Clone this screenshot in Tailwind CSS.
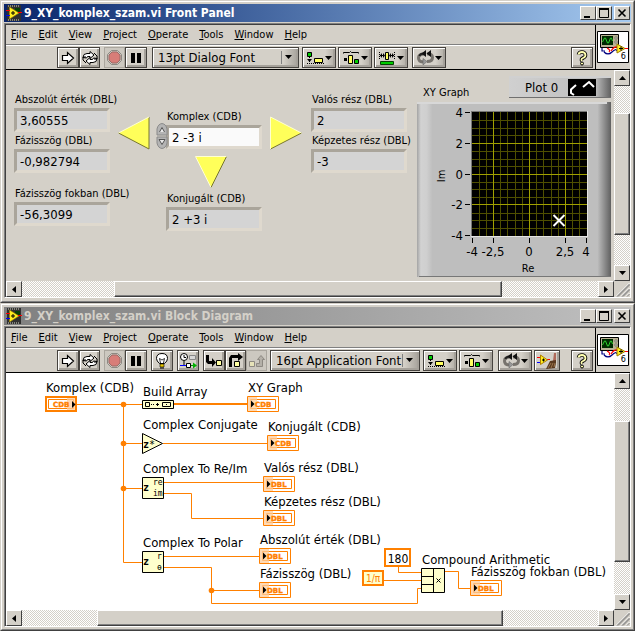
<!DOCTYPE html>
<html lang="en">
<head>
  <meta charset="UTF-8" />
  <meta name="viewport" content="width=device-width, initial-scale=1" />
  <title>9_XY_komplex_szam.vi</title>
  <script src="https://cdn.jsdelivr.net/npm/@tailwindcss/browser@4"></script>
</head>

<body class="min-h-screen flex flex-col bg-[#d4d0c8] text-black text-[11px] leading-4 font-['DejaVu_Sans_Condensed','DejaVu_Sans',sans-serif]">

  <!-- shared symbols -->
  <svg class="hidden" xmlns="http://www.w3.org/2000/svg">
    <symbol id="vi" viewBox="0 0 16 16">
      <path d="M1 0h14v16H1z" fill="#303030" />
      <path d="M2 1h12M2 15h12" stroke="#d8d8c8" stroke-dasharray="1 1" />
      <path d="M9 3h5v5H9z" fill="#064006" />
      <path d="M3.500 2v12L13 8z" fill="#ffee20" stroke="#a08000" stroke-width=".6" />
      <path d="M5 8h4M7 6v4" stroke="#000" />
      <path d="M0 5.500h4M12 7.500h4" stroke="#f00" />
      <path d="M0 10.500h4" stroke="#00f" />
    </symbol>
    <symbol id="viBig" viewBox="0 0 32 32">
      <path d="M.5.5h31v31H.5z" fill="#fff" stroke="#000" />
      <path d="M3.500 3.500h18v13h-18z" fill="#b9b294" stroke="#000" />
      <path d="M5 5h11v9H5z" fill="#002a00" />
      <path d="M5.500 11l2-4h1l2 5h1l2-5h1l1 3" fill="none" stroke="#2fd02f" />
      <path d="M18 6h2v2h-2zM18 10h2v2h-2z" fill="#e8e4d0" stroke="#555" stroke-width=".6" />
      <path d="M5 17v3h3M7 21q4 4 8 0t5-1" fill="none" stroke="#000080" stroke-width="1.200" />
      <path d="M10 17q4 2 2 4M14 20q3-5 7-4" fill="none" stroke="#f00" stroke-width="1.200" />
      <path d="M20 13v9l8-4.500z" fill="#ffee20" stroke="#a08000" />
      <path d="M22 17.500h4M24 15.500v4" stroke="#000" />
      <path d="M28 17.500h3" stroke="#f00" />
    </symbol>
    <symbol id="run" viewBox="0 0 14 14">
      <path d="M1.500 4.500h5v-3l6 5.500-6 5.500v-3h-5z" fill="#fff" stroke="#000" stroke-width="1.200" />
    </symbol>
    <symbol id="loop" viewBox="0 0 16 14">
      <path d="M1 6.500q0-4 4-4h3V.5l4 3.500-4 3.500v-2H5.500l-1 1.500z" fill="#fff" stroke="#000" />
      <path d="M15 7.500q0 4-4 4H8v2L4 10l4-3.500v2h2.500l1-1.500z" fill="#fff" stroke="#000" />
      <path d="M12 2l3 3v3h-3M4 12L1 9V6h3" fill="none" stroke="#000" />
    </symbol>
    <symbol id="stop" viewBox="0 0 15 15">
      <path d="M4.500.5h6l4 4v6l-4 4h-6l-4-4v-6z" fill="#c9c5bd" stroke="#8d8982" />
      <path d="M5 2h5l3 3v5l-3 3H5l-3-3V5z" fill="#d87d78" stroke="#9c6a66" />
    </symbol>
    <symbol id="pause" viewBox="0 0 12 12">
      <path d="M1 1h4v10H1zM7 1h4v10H7z" />
    </symbol>
    <symbol id="bulb" viewBox="0 0 14 16">
      <path d="M4.500 10.500Q1.500 8 1.500 5.500q0-5 5.500-5t5.500 5q0 2.500-3 5z" fill="#fff" stroke="#000" />
      <path d="M5.500 10L4.500 5.500 7 7l2.500-1.500L8.500 10" fill="none" stroke="#000" stroke-width=".8" />
      <path d="M5 11h4v3H5z" fill="#e8c800" stroke="#000" stroke-width=".6" />
      <path d="M5 15h4" stroke="#000" />
    </symbol>
    <symbol id="retain" viewBox="0 0 18 16">
      <circle cx="5" cy="4" r="3.500" fill="#fff" stroke="#000" />
      <path d="M5 2v2.500h2M5 8v4" fill="none" stroke="#000" />
      <path d="M10.500 2.500h6v4h-6z" fill="#d8d8d8" stroke="#888" />
      <path d="M1 12.500h7" stroke="#00f" />
      <path d="M7.500 10.500h4v4h-4z" fill="#fff" stroke="#000" />
      <path d="M12 12.500h3" stroke="#00a000" />
      <path d="M14 9.500v6l4-3z" fill="#00b000" />
    </symbol>
    <symbol id="into" viewBox="0 0 18 16">
      <path d="M1 2h3v6h3V5l4 4.500L7 14v-3H3L1 9z" />
      <path d="M11.500 7.500h5v5h-5z" fill="#ffffa0" stroke="#000" />
    </symbol>
    <symbol id="over" viewBox="0 0 16 16">
      <path d="M1 14V5l2-3h7V0l5 4-5 4V5H4v9z" />
      <path d="M6.500 8.500h5v5h-5z" fill="#ffffa0" stroke="#000" />
    </symbol>
    <symbol id="out" viewBox="0 0 18 16">
      <path d="M1.500 8.500h5v5h-5z" fill="#e6e2b8" stroke="#8d8982" />
      <path d="M8.500 13.500v-3h3V6.500h-2l3.500-4 3.500 4h-2v7z" fill="#b4b0a8" stroke="#8d8982" />
    </symbol>
    <symbol id="align" viewBox="0 0 18 14">
      <path d="M1.500 1.500h4v4h-4z" fill="#0c0" stroke="#000" />
      <path d="M3.500 6v6M1 12.500h17" stroke="#000" stroke-dasharray="1 1" />
      <path d="M1 8h5L3.500 11z" />
      <path d="M8.500 7.500h8v4h-8z" fill="#ffff60" stroke="#000" />
    </symbol>
    <symbol id="distribute" viewBox="0 0 18 14">
      <path d="M1.500 2.500v-1h6L8.500.5l1 1h7v1" fill="none" stroke="#000" />
      <path d="M2 7h3v3H2z" />
      <path d="M6.500 4.500h4v8h-4z" fill="#ffff60" stroke="#000" />
      <path d="M12.500 8.500h4v4h-4z" fill="#0c0" stroke="#000" />
    </symbol>
    <symbol id="resize" viewBox="0 0 16 14">
      <path d="M.5 1v8M15.500 1v8" stroke="#000" stroke-dasharray="1 1" />
      <path d="M1 4.500h4M11 4.500h4" stroke="#000" />
      <path d="M3 2v5L1 4.500zM4 2l2 2.500L4 7zM13 2v5l2-2.500zM12 2l-2 2.500L12 7z" />
      <path d="M6.500 1.500h3v7h-3z" fill="#ffff60" stroke="#000" />
      <path d="M1.500 10.500h13v3h-13z" fill="#0c0" stroke="#064006" />
    </symbol>
    <symbol id="reorder" viewBox="0 0 17 15">
      <path d="M7 4Q1.500 4 1.500 8t5.500 4" fill="none" stroke="#77736d" stroke-width="3" />
      <path d="M10 11.500q5.500 0 5.500-4T10 4" fill="none" stroke="#77736d" stroke-width="3" />
      <path d="M9 3.500Q3 3 2.500 6" fill="none" stroke="#222" stroke-width="2" />
      <path d="M9 0v7L4.500 3.500zM14 0v7L9.500 3.500z" fill="#111" />
      <path d="M6 8.500V15l4-3.500z" fill="#999" stroke="#666" stroke-width=".6" />
    </symbol>
    <symbol id="clean" viewBox="0 0 20 16">
      <path d="M0 4.500h3M10 6.500h3" stroke="#f00" />
      <path d="M0 9.500h3" stroke="#00f" />
      <path d="M3.500 2v9.500L10.500 7z" fill="#ffee20" stroke="#b08000" />
      <path d="M5 7h3M6.500 5.500v3" stroke="#000" />
      <path d="M17 0h2v8h-3z" fill="#b06a5a" />
      <path d="M13 8l6-1v3l-1 5-9 1z" fill="#5a3a20" />
      <path d="M11 15l3-5M14 15l2-5M17 14l1-4" stroke="#b89060" stroke-width=".7" />
    </symbol>
    <symbol id="help" viewBox="0 0 12 16">
      <path d="M2.500 4.500Q3 2 6 2t3.500 3Q9.500 7 7 8T6 11" fill="none" stroke="#000" stroke-width="3.600" />
      <path d="M2.500 4.500Q3 2 6 2t3.500 3Q9.500 7 7 8T6 11" fill="none" stroke="#ffffb0" stroke-width="1.800" />
      <circle cx="6" cy="13.500" r="1.500" fill="#ffffb0" stroke="#000" />
    </symbol>
    <symbol id="down" viewBox="0 0 7 4"><path d="M0 0h7L3.500 4z" /></symbol>
    <symbol id="up" viewBox="0 0 7 4"><path d="M0 4h7L3.500 0z" /></symbol>
    <symbol id="left" viewBox="0 0 4 7"><path d="M4 0v7L0 3.500z" /></symbol>
    <symbol id="right" viewBox="0 0 4 7"><path d="M0 0v7l4-3.500z" /></symbol>
    <symbol id="min" viewBox="0 0 10 10"><path d="M1 8h6v2H1z" /></symbol>
    <symbol id="max" viewBox="0 0 10 10"><path d="M.5 1v8.500h9V1" fill="none" stroke="#000" /><path d="M0 0h10v2H0z" /></symbol>
    <symbol id="close" viewBox="0 0 10 10"><path d="M1.500 1.500l7 7M8.500 1.500l-7 7" stroke="#000" stroke-width="1.600" /></symbol>
    <symbol id="grip" viewBox="0 0 16 16">
      <path d="M2 15.500L15.500 2M7 15.500L15.500 7M12 15.500l3.500-3.500" stroke="#fff" />
      <path d="M3 15.500L15.500 3M4 15.500L15.500 4M8 15.500L15.500 8M9 15.500L15.500 9M13 15.500l2.500-2.500" stroke="#808080" />
    </symbol>
    <symbol id="indicator" viewBox="0 0 32 16">
      <path d="M.5.5h31v15H.5z" fill="#fff" stroke="#ff8000" />
      <path d="M3.500 3.500h25v9h-25z" fill="none" stroke="#ff8000" />
      <path d="M1 1h9v14H1z" fill="#ffcc99" fill-opacity=".75" />
      <path d="M4 4.500v7L7.500 8z" />
    </symbol>
  </svg>

  <!-- Front Panel -->
  <section class="border border-t-[#d4d0c8] border-l-[#d4d0c8] border-r-[#404040] border-b-[#404040]">
    <div class="border border-t-white border-l-white border-r-[#808080] border-b-[#808080] p-[2px] pb-[3px]">
      <header class="flex h-[18px] items-center bg-linear-to-r from-[#0a246a] to-[#a6caf0] pl-[2px] pr-px">
        <svg class="size-4"><use href="#vi" /></svg>
        <h1 class="flex-1 pl-[2px] text-xs font-bold text-white">9_XY_komplex_szam.vi Front Panel</h1>
        <button aria-label="Minimize" class="grid h-[14px] w-4 place-items-center border border-t-white border-l-white border-r-[#404040] border-b-[#404040] bg-[#d4d0c8]"><svg class="size-[10px]"><use href="#min" /></svg></button>
        <button aria-label="Maximize" class="grid h-[14px] w-4 place-items-center border border-t-white border-l-white border-r-[#404040] border-b-[#404040] bg-[#d4d0c8]"><svg class="size-[10px]"><use href="#max" /></svg></button>
        <button aria-label="Close" class="ml-[2px] grid h-[14px] w-4 place-items-center border border-t-white border-l-white border-r-[#404040] border-b-[#404040] bg-[#d4d0c8]"><svg class="size-[10px]"><use href="#close" /></svg></button>
      </header>

      <div class="mt-px border-t border-l border-t-[#808080] border-l-[#808080] border-r border-b border-r-white border-b-white">
        <div class="border-t border-l border-[#404040]">
          <div class="flex h-[45px] border-b border-black">
            <div class="flex-1">
              <nav class="flex h-5 items-center gap-[11px] border-b border-[#808080] pl-[5px]">
                <button><u>F</u>ile</button>
                <button><u>E</u>dit</button>
                <button><u>V</u>iew</button>
                <button><u>P</u>roject</button>
                <button><u>O</u>perate</button>
                <button><u>T</u>ools</button>
                <button><u>W</u>indow</button>
                <button><u>H</u>elp</button>
              </nav>
              <div class="flex h-6 items-center border-t border-white pl-[51px] pr-[2px]">
                <button aria-label="Run" class="grid h-[21px] w-[22px] place-items-center border border-[#45423e] bg-[#d4d0c8] shadow-[inset_1px_1px_#fff,inset_-2px_-2px_#a5a19a]"><svg class="size-[14px]"><use href="#run" /></svg></button>
                <button aria-label="Run continuously" class="grid h-[21px] w-[21px] place-items-center border border-[#45423e] bg-[#d4d0c8] shadow-[inset_1px_1px_#fff,inset_-2px_-2px_#a5a19a]"><svg class="h-[14px] w-4"><use href="#loop" /></svg></button>
                <button aria-label="Abort" disabled class="ml-1 grid h-[21px] w-[21px] place-items-center border border-[#aaa69e] bg-[#ccc8c0]"><svg class="size-[15px]"><use href="#stop" /></svg></button>
                <button aria-label="Pause" class="grid h-[21px] w-[22px] place-items-center border border-[#45423e] bg-[#d4d0c8] shadow-[inset_1px_1px_#fff,inset_-2px_-2px_#a5a19a]"><svg class="size-3"><use href="#pause" /></svg></button>
                <div class="relative ml-[5px] h-[21px] w-[147px]">
                  <select aria-label="Text settings" class="h-full w-full appearance-none border border-[#45423e] bg-linear-to-r from-[#d4d0c8] from-90% to-[#a5a19a] pl-[5px] text-[13px] shadow-[inset_1px_1px_#fff,inset_-2px_-2px_#a5a19a]"><option>13pt Dialog Font</option></select>
                  <span class="pointer-events-none absolute inset-y-1 right-[17px] border-l border-[#808080]"></span>
                  <svg class="pointer-events-none absolute top-2 right-[7px] h-1 w-[7px]"><use href="#down" /></svg>
                </div>
                <button aria-label="Align objects" class="ml-[3px] flex h-[21px] w-[34px] items-center justify-center gap-px border border-[#45423e] bg-linear-to-r from-[#d4d0c8] from-70% to-[#b0aca4] shadow-[inset_1px_1px_#fff,inset_-2px_-2px_#a5a19a]"><svg class="h-[14px] w-[18px]"><use href="#align" /></svg><svg class="h-1 w-[7px]"><use href="#down" /></svg></button>
                <button aria-label="Distribute objects" class="ml-[2px] flex h-[21px] w-[34px] items-center justify-center gap-px border border-[#45423e] bg-linear-to-r from-[#d4d0c8] from-70% to-[#b0aca4] shadow-[inset_1px_1px_#fff,inset_-2px_-2px_#a5a19a]"><svg class="h-[14px] w-[18px]"><use href="#distribute" /></svg><svg class="h-1 w-[7px]"><use href="#down" /></svg></button>
                <button aria-label="Resize objects" class="ml-[2px] flex h-[21px] w-[34px] items-center justify-center gap-[2px] border border-[#45423e] bg-linear-to-r from-[#d4d0c8] from-70% to-[#b0aca4] shadow-[inset_1px_1px_#fff,inset_-2px_-2px_#a5a19a]"><svg class="h-[14px] w-4"><use href="#resize" /></svg><svg class="h-1 w-[7px]"><use href="#down" /></svg></button>
                <button aria-label="Reorder" class="ml-1 flex h-[21px] w-[34px] items-center justify-center gap-px border border-[#45423e] bg-linear-to-r from-[#d4d0c8] from-70% to-[#b0aca4] shadow-[inset_1px_1px_#fff,inset_-2px_-2px_#a5a19a]"><svg class="h-[15px] w-[17px]"><use href="#reorder" /></svg><svg class="h-1 w-[7px]"><use href="#down" /></svg></button>
                <button aria-label="Help" class="ml-auto grid h-[21px] w-[22px] place-items-center border border-[#45423e] bg-[#d4d0c8] shadow-[inset_1px_1px_#fff,inset_-2px_-2px_#a5a19a]"><svg class="h-4 w-3"><use href="#help" /></svg></button>
              </div>
            </div>
            <div class="relative grid w-[35px] place-items-center border-l border-black">
              <svg class="size-8"><use href="#viBig" /></svg>
              <span class="absolute right-1 bottom-[7px] text-[9px] leading-3">6</span>
            </div>
          </div>

          <div class="flex">
            <main class="relative h-[211px] flex-1 overflow-hidden">
              <!-- controls and indicators -->
              <div class="absolute left-2 top-[22px] w-24">
                <label for="absz" class="block whitespace-nowrap pl-px">Abszolút érték (DBL)</label>
                <input id="absz" readonly value="3,60555" class="block h-6 w-full border-[3px] border-t-[#aaa59b] border-l-[#aaa59b] border-r-[#dfd9ce] border-b-[#dfd9ce] bg-[#d4d4d4] px-[3px] text-[13px]" />
              </div>
              <div class="absolute left-2 top-[63px] w-24">
                <label for="fazis" class="block whitespace-nowrap pl-px">Fázisszög (DBL)</label>
                <input id="fazis" readonly value="-0,982794" class="block h-6 w-full border-[3px] border-t-[#aaa59b] border-l-[#aaa59b] border-r-[#dfd9ce] border-b-[#dfd9ce] bg-[#d4d4d4] px-[3px] text-[13px]" />
              </div>
              <div class="absolute left-2 top-[116px] w-24">
                <label for="fokban" class="block whitespace-nowrap pl-px">Fázisszög fokban (DBL)</label>
                <input id="fokban" readonly value="-56,3099" class="block h-6 w-full border-[3px] border-t-[#aaa59b] border-l-[#aaa59b] border-r-[#dfd9ce] border-b-[#dfd9ce] bg-[#d4d4d4] px-[3px] text-[13px]" />
              </div>
              <div class="absolute left-40 top-[39px] w-24">
                <label for="komplex" class="block whitespace-nowrap pl-px">Komplex (CDB)</label>
                <input id="komplex" value="2 -3 i" class="block h-6 w-full border-[3px] border-t-[#aaa59b] border-l-[#aaa59b] border-r-[#dfd9ce] border-b-[#dfd9ce] bg-[#fafafa] px-[3px] text-[13px]" />
              </div>
              <div class="absolute left-40 top-[121px] w-24">
                <label for="konj" class="block whitespace-nowrap pl-px">Konjugált (CDB)</label>
                <input id="konj" readonly value="2 +3 i" class="block h-6 w-full border-[3px] border-t-[#aaa59b] border-l-[#aaa59b] border-r-[#dfd9ce] border-b-[#dfd9ce] bg-[#d4d4d4] px-[3px] text-[13px]" />
              </div>
              <div class="absolute left-[305px] top-[22px] w-24">
                <label for="valos" class="block whitespace-nowrap pl-px">Valós rész (DBL)</label>
                <input id="valos" readonly value="2" class="block h-6 w-full border-[3px] border-t-[#aaa59b] border-l-[#aaa59b] border-r-[#dfd9ce] border-b-[#dfd9ce] bg-[#d4d4d4] px-[3px] text-[13px]" />
              </div>
              <div class="absolute left-[305px] top-[63px] w-24">
                <label for="kepz" class="block whitespace-nowrap pl-px">Képzetes rész (DBL)</label>
                <input id="kepz" readonly value="-3" class="block h-6 w-full border-[3px] border-t-[#aaa59b] border-l-[#aaa59b] border-r-[#dfd9ce] border-b-[#dfd9ce] bg-[#d4d4d4] px-[3px] text-[13px]" />
              </div>

              <div class="absolute left-[150px] top-[53px] flex flex-col">
                <button aria-label="Increment"><svg class="block h-[13px] w-3" viewBox="0 0 12 13"><path d="M1 12V6Q2 1 6 .5 10 1 11 6v6z" fill="#b4b4b4" stroke="#8a8a8a" /><path d="M3.500 9L6 4.500 8.500 9" fill="#e8e8e8" stroke="#555" /></svg></button>
                <button aria-label="Decrement"><svg class="block h-[13px] w-3" viewBox="0 0 12 13"><path d="M1 1v6q1 5 5 5.500 4-.5 5-5.500V1z" fill="#b4b4b4" stroke="#8a8a8a" /><path d="M3 3.500h6L6 8.500z" fill="#e8e8e8" stroke="#555" /></svg></button>
              </div>

              <!-- arrows -->
              <svg class="absolute left-28 top-[46px] h-[34px] w-8" viewBox="0 0 32 34"><path d="M.5 17L31 1v32z" fill="#ffff5a" /><path d="M.5 17L31 33V1" fill="none" stroke="#77762e" /><path d="M.5 17L31 1" stroke="#ffffd0" /></svg>
              <svg class="absolute left-66 top-[46px] h-[34px] w-8" viewBox="0 0 32 34"><path d="M.5 1L31.500 17 .5 33z" fill="#ffff5a" /><path d="M.5 33l31-16" stroke="#77762e" /><path d="M31.500 17L.5 1v32" fill="none" stroke="#ffffd0" /></svg>
              <svg class="absolute left-[189px] top-[86px] h-8 w-8" viewBox="0 0 32 32"><path d="M.5.5h31L16 31.500z" fill="#ffff5a" /><path d="M31.500.5L16 31.500" stroke="#77762e" /><path d="M16 31.500L.5.5h31" fill="none" stroke="#ffffd0" /></svg>

              <!-- graph -->
              <span class="absolute left-[417px] top-[15px]">XY Graph</span>
              <div class="absolute left-[503px] top-[6px] flex h-[22px] w-[102px] items-center justify-between border-t-2 border-b border-t-[#d0d0d0] border-b-[#707070] bg-linear-to-r from-[#d0d0d0] via-[#bebebe] via-85% to-[#606060] pl-4 pr-[15px] text-[13px]">
                <span>Plot 0</span>
                <svg class="h-[17px] w-7" viewBox="0 0 28 17"><path d="M0 0h28v17H0z" /><path d="M8 6l-5 4.500V14l3 2M15 8l6-5 5 5" fill="none" stroke="#fff" stroke-width="2" /></svg>
              </div>
              <svg class="absolute left-[411px] top-8 h-[175px] w-[194px] font-['DejaVu_Sans_Condensed','DejaVu_Sans',sans-serif] text-[13px]" viewBox="417 102 194 175">
                <defs>
                  <linearGradient id="bezel">
                    <stop offset="0" stop-color="#a4a4a4" /><stop offset=".02" stop-color="#d2d2d2" /><stop offset=".05" stop-color="#cfcfcf" /><stop offset=".08" stop-color="#bebebe" />
                    <stop offset=".93" stop-color="#bebebe" /><stop offset="1" stop-color="#606060" />
                  </linearGradient>
                </defs>
                <path d="M417 102h194v175H417z" fill="url(#bezel)" />
                <path d="M417 103h190" stroke="#d8d8d8" stroke-width="2" />
                <path d="M419 276.500h192" stroke="#777" />
                <path d="M471 111h117v126H471z" fill="#e4e4e4" />
                <path d="M471 111h116v125H471z" fill="#777" />
                <path d="M472 112h115v124H472z" />
                <path d="M479.500 112v124M486.500 112v124M500.500 112v124M507.500 112v124M515.500 112v124M522.500 112v124M536.500 112v124M543.500 112v124M551.500 112v124M558.500 112v124M572.500 112v124M579.500 112v124M472 120.500h115M472 128.500h115M472 135.500h115M472 151.500h115M472 159.500h115M472 166.500h115M472 182.500h115M472 189.500h115M472 197.500h115M472 213.500h115M472 220.500h115M472 228.500h115" stroke="#4f4f00" />
                <path d="M493.500 112v124M529.500 112v124M565.500 112v124M472 143.500h115M472 174.500h115M472 204.500h115" stroke="#a0a000" />
                <path d="M553.500 215l11 11M564.500 215l-11 11" stroke="#fff" stroke-width="2" />
                <path d="M465 112.500h5M465 143.500h5M465 174.500h5M465 204.500h5M465 235.500h5M472.500 238v5M493.500 238v5M529.500 238v5M565.500 238v5M586.500 238v5" stroke="#000" />
                <g text-anchor="end">
                  <text x="463" y="117">4</text>
                  <text x="463" y="148">2</text>
                  <text x="463" y="179">0</text>
                  <text x="463" y="209">-2</text>
                  <text x="463" y="240">-4</text>
                </g>
                <g text-anchor="middle">
                  <text x="472" y="256">-4</text>
                  <text x="493" y="256">-2,5</text>
                  <text x="529" y="256">0</text>
                  <text x="565" y="256">2,5</text>
                  <text x="586" y="256">4</text>
                  <text x="528" y="272" class="text-[11px]">Re</text>
                  <text x="445" y="176" class="text-[11px]" transform="rotate(-90 445 176)">Im</text>
                </g>
              </svg>
            </main>
            <!-- vertical scroll bar -->
            <div class="flex w-4 flex-col bg-[repeating-conic-gradient(#fff_0_25%,#d4d0c8_0_50%)] bg-[length:2px_2px]">
              <button aria-label="Scroll up" class="grid h-4 place-items-center border border-t-white border-l-white border-r-[#404040] border-b-[#404040] bg-[#d4d0c8]"><svg class="h-1 w-[7px]"><use href="#up" /></svg></button>
              <span class="flex-[27]"></span>
              <span class="flex-[122] border border-t-white border-l-white border-r-[#404040] border-b-[#404040] bg-[#d4d0c8] shadow-[inset_-1px_-1px_#808080]"></span>
              <span class="flex-[30]"></span>
              <button aria-label="Scroll down" class="grid h-4 place-items-center border border-t-white border-l-white border-r-[#404040] border-b-[#404040] bg-[#d4d0c8]"><svg class="h-1 w-[7px]"><use href="#down" /></svg></button>
            </div>
          </div>
          <div class="flex h-4">
            <div class="flex flex-1 bg-[repeating-conic-gradient(#fff_0_25%,#d4d0c8_0_50%)] bg-[length:2px_2px]">
              <button aria-label="Scroll left" class="grid w-4 place-items-center border border-t-white border-l-white border-r-[#404040] border-b-[#404040] bg-[#d4d0c8]"><svg class="h-[7px] w-1"><use href="#left" /></svg></button>
              <span class="flex-[92]"></span>
              <span class="flex-[388] border border-t-white border-l-white border-r-[#404040] border-b-[#404040] bg-[#d4d0c8] shadow-[inset_-1px_-1px_#808080]"></span>
              <span class="flex-[96]"></span>
              <button aria-label="Scroll right" class="grid w-4 place-items-center border border-t-white border-l-white border-r-[#404040] border-b-[#404040] bg-[#d4d0c8]"><svg class="h-[7px] w-1"><use href="#right" /></svg></button>
            </div>
            <svg class="size-4"><use href="#grip" /></svg>
          </div>
        </div>
      </div>
    </div>
  </section>

  <!-- Block Diagram -->
  <section class="border border-t-[#d4d0c8] border-l-[#d4d0c8] border-r-[#404040] border-b-[#404040]">
    <div class="border border-t-white border-l-white border-r-[#808080] border-b-[#808080] p-[2px]">
      <header class="flex h-[18px] items-center bg-linear-to-r from-[#808080] to-[#c0c0c0] pl-[2px] pr-px">
        <svg class="size-4"><use href="#vi" /></svg>
        <h1 class="flex-1 pl-[2px] text-xs font-bold text-[#d4d0c8]">9_XY_komplex_szam.vi Block Diagram</h1>
        <button aria-label="Minimize" class="grid h-[14px] w-4 place-items-center border border-t-white border-l-white border-r-[#404040] border-b-[#404040] bg-[#d4d0c8]"><svg class="size-[10px]"><use href="#min" /></svg></button>
        <button aria-label="Maximize" class="grid h-[14px] w-4 place-items-center border border-t-white border-l-white border-r-[#404040] border-b-[#404040] bg-[#d4d0c8]"><svg class="size-[10px]"><use href="#max" /></svg></button>
        <button aria-label="Close" class="ml-[2px] grid h-[14px] w-4 place-items-center border border-t-white border-l-white border-r-[#404040] border-b-[#404040] bg-[#d4d0c8]"><svg class="size-[10px]"><use href="#close" /></svg></button>
      </header>

      <div class="mt-px border-t border-l border-t-[#808080] border-l-[#808080] border-r border-b border-r-white border-b-white">
        <div class="border-t border-l border-[#404040]">
          <div class="flex h-[45px] border-b border-black">
            <div class="flex-1">
              <nav class="flex h-5 items-center gap-[11px] border-b border-[#808080] pl-[5px]">
                <button><u>F</u>ile</button>
                <button><u>E</u>dit</button>
                <button><u>V</u>iew</button>
                <button><u>P</u>roject</button>
                <button><u>O</u>perate</button>
                <button><u>T</u>ools</button>
                <button><u>W</u>indow</button>
                <button><u>H</u>elp</button>
              </nav>
              <div class="flex h-6 items-center border-t border-white pl-[51px] pr-[2px]">
                <button aria-label="Run" class="grid h-[21px] w-[22px] place-items-center border border-[#45423e] bg-[#d4d0c8] shadow-[inset_1px_1px_#fff,inset_-2px_-2px_#a5a19a]"><svg class="size-[14px]"><use href="#run" /></svg></button>
                <button aria-label="Run continuously" class="grid h-[21px] w-[21px] place-items-center border border-[#45423e] bg-[#d4d0c8] shadow-[inset_1px_1px_#fff,inset_-2px_-2px_#a5a19a]"><svg class="h-[14px] w-4"><use href="#loop" /></svg></button>
                <button aria-label="Abort" disabled class="ml-1 grid h-[21px] w-[21px] place-items-center border border-[#aaa69e] bg-[#ccc8c0]"><svg class="size-[15px]"><use href="#stop" /></svg></button>
                <button aria-label="Pause" class="grid h-[21px] w-[22px] place-items-center border border-[#45423e] bg-[#d4d0c8] shadow-[inset_1px_1px_#fff,inset_-2px_-2px_#a5a19a]"><svg class="size-3"><use href="#pause" /></svg></button>
                <button aria-label="Highlight execution" class="ml-1 grid h-[21px] w-[22px] place-items-center border border-[#45423e] bg-[#d4d0c8] shadow-[inset_1px_1px_#fff,inset_-2px_-2px_#a5a19a]"><svg class="h-4 w-[14px]"><use href="#bulb" /></svg></button>
                <button aria-label="Retain wire values" class="ml-1 grid h-[21px] w-[22px] place-items-center border border-[#45423e] bg-[#d4d0c8] shadow-[inset_1px_1px_#fff,inset_-2px_-2px_#a5a19a]"><svg class="h-4 w-[18px]"><use href="#retain" /></svg></button>
                <button aria-label="Step into" class="ml-1 grid h-[21px] w-[22px] place-items-center border border-[#45423e] bg-[#d4d0c8] shadow-[inset_1px_1px_#fff,inset_-2px_-2px_#a5a19a]"><svg class="h-4 w-[18px]"><use href="#into" /></svg></button>
                <button aria-label="Step over" class="grid h-[21px] w-[21px] place-items-center border border-[#45423e] bg-[#d4d0c8] shadow-[inset_1px_1px_#fff,inset_-2px_-2px_#a5a19a]"><svg class="h-4 w-4"><use href="#over" /></svg></button>
                <button aria-label="Step out" disabled class="grid h-[21px] w-[21px] place-items-center border border-[#aaa69e] bg-[#ccc8c0]"><svg class="h-4 w-[18px]"><use href="#out" /></svg></button>
                <div class="relative ml-[3px] h-[21px] w-[150px]">
                  <select aria-label="Text settings" class="h-full w-full appearance-none border border-[#45423e] bg-linear-to-r from-[#d4d0c8] from-90% to-[#a5a19a] pl-[5px] text-[13px] shadow-[inset_1px_1px_#fff,inset_-2px_-2px_#a5a19a]"><option>16pt Application Font</option></select>
                  <span class="pointer-events-none absolute inset-y-1 right-[17px] border-l border-[#808080]"></span>
                  <svg class="pointer-events-none absolute top-2 right-[7px] h-1 w-[7px]"><use href="#down" /></svg>
                </div>
                <button aria-label="Align objects" class="ml-[3px] flex h-[21px] w-[34px] items-center justify-center gap-px border border-[#45423e] bg-linear-to-r from-[#d4d0c8] from-70% to-[#b0aca4] shadow-[inset_1px_1px_#fff,inset_-2px_-2px_#a5a19a]"><svg class="h-[14px] w-[18px]"><use href="#align" /></svg><svg class="h-1 w-[7px]"><use href="#down" /></svg></button>
                <button aria-label="Distribute objects" class="ml-[2px] flex h-[21px] w-[34px] items-center justify-center gap-px border border-[#45423e] bg-linear-to-r from-[#d4d0c8] from-70% to-[#b0aca4] shadow-[inset_1px_1px_#fff,inset_-2px_-2px_#a5a19a]"><svg class="h-[14px] w-[18px]"><use href="#distribute" /></svg><svg class="h-1 w-[7px]"><use href="#down" /></svg></button>
                <button aria-label="Reorder" class="ml-[5px] flex h-[21px] w-[34px] items-center justify-center gap-px border border-[#45423e] bg-linear-to-r from-[#d4d0c8] from-70% to-[#b0aca4] shadow-[inset_1px_1px_#fff,inset_-2px_-2px_#a5a19a]"><svg class="h-[15px] w-[17px]"><use href="#reorder" /></svg><svg class="h-1 w-[7px]"><use href="#down" /></svg></button>
                <button aria-label="Clean up diagram" class="ml-[2px] grid h-[21px] w-[26px] place-items-center border border-[#45423e] bg-[#d4d0c8] shadow-[inset_1px_1px_#fff,inset_-2px_-2px_#a5a19a]"><svg class="h-4 w-5"><use href="#clean" /></svg></button>
                <button aria-label="Help" class="ml-auto grid h-[21px] w-[22px] place-items-center border border-[#45423e] bg-[#d4d0c8] shadow-[inset_1px_1px_#fff,inset_-2px_-2px_#a5a19a]"><svg class="h-4 w-3"><use href="#help" /></svg></button>
              </div>
            </div>
            <div class="relative grid w-[35px] place-items-center border-l border-black">
              <svg class="size-8"><use href="#viBig" /></svg>
              <span class="absolute right-1 bottom-[7px] text-[9px] leading-3">6</span>
            </div>
          </div>

          <div class="flex">
            <main class="flex-1 overflow-hidden bg-white">
              <svg class="block h-[237px] w-[608px] font-['DejaVu_Sans_Condensed','DejaVu_Sans',sans-serif] text-[13px]" viewBox="6 373 608 237">
                <!-- wires -->
                <g fill="none" stroke="#ff8000">
                  <path d="M77 404.500h65M123.500 404v158.500H142M123 443.500h19M123 488.500h19" />
                  <path d="M174 404h73" stroke-width="2" />
                  <path d="M163 443.500h104M164 482.500h99M164 493.500h27.500v25H263" />
                  <path d="M164 556.500h95M164 567.500h47.500v36h206v-15h4M211 590.500h48" />
                  <path d="M398.500 567v5.500H421M384 580.500h37M445 571.500h13.500v17H470" />
                </g>
                <g fill="#ff8000">
                  <circle cx="123.500" cy="404.500" r="2.800" />
                  <circle cx="123.500" cy="443.500" r="2.800" />
                  <circle cx="123.500" cy="488.500" r="2.800" />
                  <circle cx="211.500" cy="590.500" r="2.800" />
                </g>

                <!-- function nodes -->
                <g fill="#ffffcc" stroke="#000">
                  <path d="M142.500 400.500h31v8h-31z" />
                  <path d="M145.500 402.500h4v4h-4zM162.500 402.500h8v4h-8z" />
                  <path d="M151 404.500h4M166 404.500h2" stroke-dasharray="1 1" />
                  <path d="M156 404.500h3M157.500 403v3" />
                  <path d="M142.500 433.500v20l20-10z" />
                  <path d="M142.500 477.500h21v21h-21z" />
                  <path d="M142.500 551.500h21v21h-21z" />
                  <path d="M421.500 568.500h23v24h-23zM433.500 568v25M421 576.500h12M421 584.500h12" />
                  <path d="M436.500 578.500l4 4M440.500 578.500l-4 4" />
                </g>
                <g class="font-['DejaVu_Sans_Mono',monospace] text-[8px]">
                  <text x="143" y="448" class="text-[10px] font-bold">z</text>
                  <text x="149" y="448" class="text-[10px]">*</text>
                  <text x="143" y="491" class="text-[10px] font-bold">z</text>
                  <text x="153" y="485">re</text>
                  <text x="153" y="496">im</text>
                  <text x="143" y="565" class="text-[10px] font-bold">z</text>
                  <text x="157" y="559">r</text>
                  <text x="157" y="570">ө</text>
                </g>

                <!-- terminals -->
                <path d="M46 397h30v14H46z" fill="#fff" stroke="#ff8000" stroke-width="2" />
                <path d="M48.500 399.500h25v9h-25z" fill="none" stroke="#ff8000" />
                <path d="M67 398h8v12h-8z" fill="#ffcc99" fill-opacity=".75" />
                <path d="M72 401v7l3.500-3.500z" />
                <use href="#indicator" x="247" y="396" width="32" height="16" />
                <use href="#indicator" x="267" y="435" width="32" height="16" />
                <use href="#indicator" x="263" y="476" width="32" height="16" />
                <use href="#indicator" x="263" y="510" width="32" height="16" />
                <use href="#indicator" x="259" y="548" width="32" height="16" />
                <use href="#indicator" x="259" y="582" width="32" height="16" />
                <use href="#indicator" x="470" y="580" width="32" height="16" />
                <g class="font-['DejaVu_Sans',sans-serif] text-[7px] font-bold" fill="#ff8000" stroke="#ff8000" stroke-width=".4">
                  <text x="53" y="407">CDB</text>
                  <text x="255" y="407">CDB</text>
                  <text x="275" y="446">CDB</text>
                  <text x="271" y="487">DBL</text>
                  <text x="271" y="521">DBL</text>
                  <text x="267" y="559">DBL</text>
                  <text x="267" y="593">DBL</text>
                  <text x="478" y="591">DBL</text>
                </g>

                <!-- constants -->
                <path d="M385 549h25v17h-25z" fill="#fff" stroke="#ff8000" stroke-width="2" />
                <text x="398" y="563" text-anchor="middle" class="text-xs">180</text>
                <path d="M363 571h20v14h-20z" fill="#ffffcc" stroke="#ff8000" stroke-width="2" />
                <text x="373" y="582" text-anchor="middle" fill="#ff8000" class="text-[10px]">1/π</text>

                <!-- labels -->
                <text x="46" y="392">Komplex (CDB)</text>
                <text x="143" y="396">Build Array</text>
                <text x="248" y="392">XY Graph</text>
                <text x="143" y="429">Complex Conjugate</text>
                <text x="268" y="431">Konjugált (CDB)</text>
                <text x="143" y="473">Complex To Re/Im</text>
                <text x="264" y="472">Valós rész (DBL)</text>
                <text x="264" y="506">Képzetes rész (DBL)</text>
                <text x="143" y="547">Complex To Polar</text>
                <text x="260" y="544">Abszolút érték (DBL)</text>
                <text x="260" y="578">Fázisszög (DBL)</text>
                <text x="422" y="564">Compound Arithmetic</text>
                <text x="471" y="576">Fázisszög fokban (DBL)</text>
              </svg>
            </main>
            <!-- vertical scroll bar -->
            <div class="flex w-4 flex-col bg-[repeating-conic-gradient(#fff_0_25%,#d4d0c8_0_50%)] bg-[length:2px_2px]">
              <button aria-label="Scroll up" class="grid h-4 place-items-center border border-t-white border-l-white border-r-[#404040] border-b-[#404040] bg-[#d4d0c8]"><svg class="h-1 w-[7px]"><use href="#up" /></svg></button>
              <span class="flex-[32]"></span>
              <span class="flex-[141] border border-t-white border-l-white border-r-[#404040] border-b-[#404040] bg-[#d4d0c8] shadow-[inset_-1px_-1px_#808080]"></span>
              <span class="flex-[32]"></span>
              <button aria-label="Scroll down" class="grid h-4 place-items-center border border-t-white border-l-white border-r-[#404040] border-b-[#404040] bg-[#d4d0c8]"><svg class="h-1 w-[7px]"><use href="#down" /></svg></button>
            </div>
          </div>
          <div class="flex h-4">
            <div class="flex flex-1 bg-[repeating-conic-gradient(#fff_0_25%,#d4d0c8_0_50%)] bg-[length:2px_2px]">
              <button aria-label="Scroll left" class="grid w-4 place-items-center border border-t-white border-l-white border-r-[#404040] border-b-[#404040] bg-[#d4d0c8]"><svg class="h-[7px] w-1"><use href="#left" /></svg></button>
              <span class="flex-[75]"></span>
              <span class="flex-[406] border border-t-white border-l-white border-r-[#404040] border-b-[#404040] bg-[#d4d0c8] shadow-[inset_-1px_-1px_#808080]"></span>
              <span class="flex-[95]"></span>
              <button aria-label="Scroll right" class="grid w-4 place-items-center border border-t-white border-l-white border-r-[#404040] border-b-[#404040] bg-[#d4d0c8]"><svg class="h-[7px] w-1"><use href="#right" /></svg></button>
            </div>
            <svg class="size-4"><use href="#grip" /></svg>
          </div>
        </div>
      </div>
    </div>
  </section>

</body>
</html>
